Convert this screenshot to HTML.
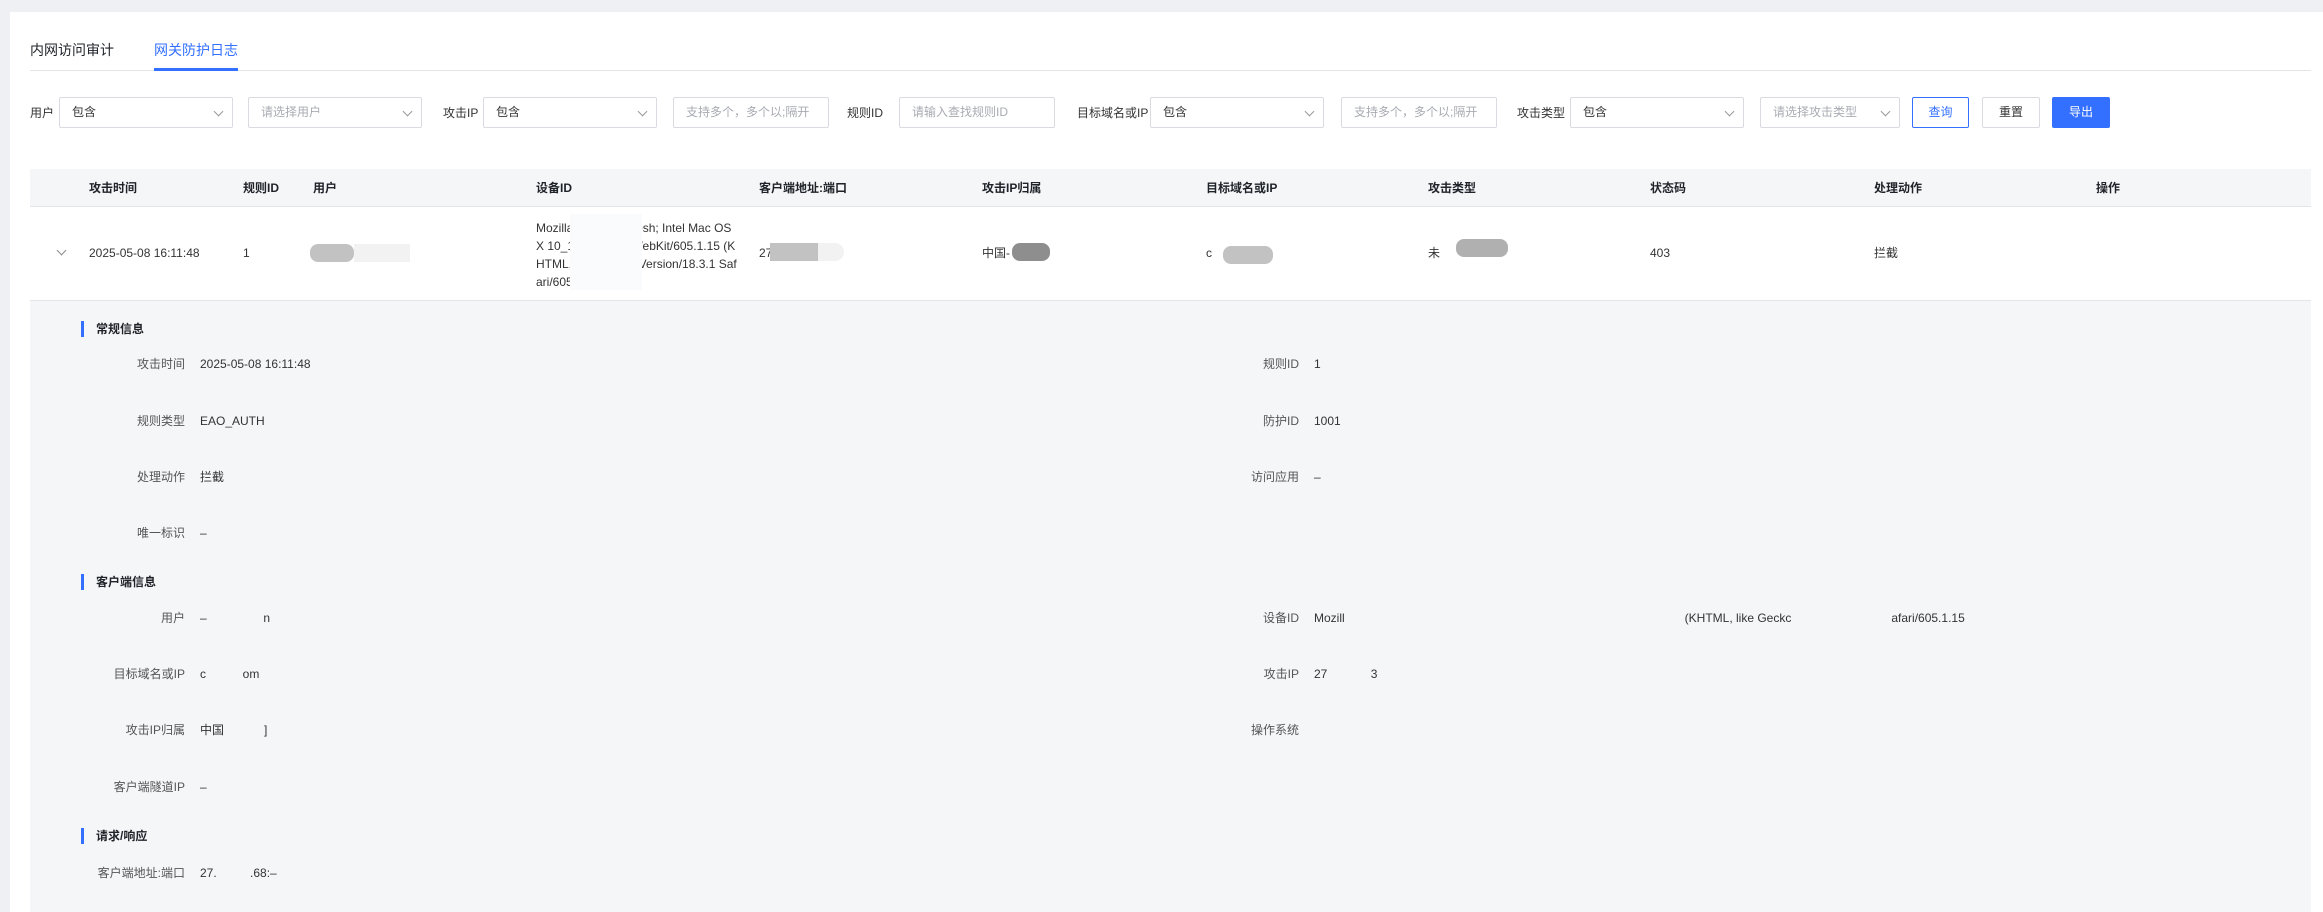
<!DOCTYPE html>
<html><head><meta charset="utf-8"><style>
*{margin:0;padding:0;box-sizing:border-box}
body{width:2323px;height:912px;background:#eef0f4;font-family:"Liberation Sans","Noto Sans CJK SC",sans-serif;font-size:12px;color:#333;position:relative;overflow:hidden}
.card{position:absolute;left:10px;top:12px;width:2313px;height:900px;background:#fff}
.a{position:absolute;white-space:nowrap;line-height:16px}
.box{position:absolute;top:97px;height:31px;border:1px solid #d9dbe0;border-radius:2px;background:#fff;font-size:12px;line-height:29px;padding-left:12px;color:#333}
.ph{color:#a8abb2}
.chev{position:absolute;right:10px;top:10px;width:7px;height:7px;border-right:1px solid #999;border-bottom:1px solid #999;transform:rotate(45deg)}
.btn{position:absolute;top:97px;height:31px;border:1px solid #d9dbe0;border-radius:2px;text-align:center;line-height:29px;font-size:12px;background:#fff}
.th{position:absolute;top:180px;font-weight:bold;color:#1f2329;line-height:16px;white-space:nowrap}
.td{position:absolute;top:245px;line-height:16px;white-space:nowrap}
.lab{position:absolute;width:160px;text-align:right;color:#555;line-height:16px;white-space:nowrap}
.val{position:absolute;line-height:16px;white-space:nowrap;color:#333}
.sec{position:absolute;left:81px;font-weight:bold;color:#1f2329;line-height:16px;padding-left:12px;border-left:3px solid #3370ff;white-space:nowrap}
.blob{position:absolute;background:#c2c2c2;border-radius:8px}
.wb{position:absolute;background:#f2f2f2}
</style></head><body>
<div class="card"></div>
<div class="a" style="left:30px;top:42px;font-size:14px;color:#1f2329">内网访问审计</div>
<div class="a" style="left:154px;top:42px;font-size:14px;color:#3370ff">网关防护日志</div>
<div style="position:absolute;left:30px;top:70px;width:2281px;height:1px;background:#e3e5e8"></div>
<div style="position:absolute;left:154px;top:68px;width:84px;height:3px;background:#3370ff"></div>

<div class="a" style="left:30px;top:105px">用户</div>
<div class="box" style="left:59px;width:174px">包含<span class="chev"></span></div>
<div class="box ph" style="left:248px;width:174px">请选择用户<span class="chev"></span></div>
<div class="a" style="left:443px;top:105px">攻击IP</div>
<div class="box" style="left:483px;width:174px">包含<span class="chev"></span></div>
<div class="box ph" style="left:673px;width:156px">支持多个，多个以;隔开</div>
<div class="a" style="left:847px;top:105px">规则ID</div>
<div class="box ph" style="left:899px;width:156px">请输入查找规则ID</div>
<div class="a" style="left:1077px;top:105px">目标域名或IP</div>
<div class="box" style="left:1150px;width:174px">包含<span class="chev"></span></div>
<div class="box ph" style="left:1341px;width:156px">支持多个，多个以;隔开</div>
<div class="a" style="left:1517px;top:105px">攻击类型</div>
<div class="box" style="left:1570px;width:174px">包含<span class="chev"></span></div>
<div class="box ph" style="left:1760px;width:140px">请选择攻击类型<span class="chev"></span></div>
<div class="btn" style="left:1912px;width:57px;border-color:#3370ff;color:#3370ff">查询</div>
<div class="btn" style="left:1982px;width:58px">重置</div>
<div class="btn" style="left:2052px;width:58px;background:#3370ff;border-color:#3370ff;color:#fff">导出</div>

<div style="position:absolute;left:30px;top:169px;width:2281px;height:38px;background:#f5f6f8;border-bottom:1px solid #e3e5e8"></div>
<div class="th" style="left:89px">攻击时间</div>
<div class="th" style="left:243px">规则ID</div>
<div class="th" style="left:313px">用户</div>
<div class="th" style="left:536px">设备ID</div>
<div class="th" style="left:759px">客户端地址:端口</div>
<div class="th" style="left:982px">攻击IP归属</div>
<div class="th" style="left:1206px">目标域名或IP</div>
<div class="th" style="left:1428px">攻击类型</div>
<div class="th" style="left:1650px">状态码</div>
<div class="th" style="left:1874px">处理动作</div>
<div class="th" style="left:2096px">操作</div>

<div style="position:absolute;left:58px;top:247px;width:7px;height:7px;border-right:1px solid #888;border-bottom:1px solid #888;transform:rotate(45deg)"></div>
<div class="td" style="left:89px">2025-05-08 16:11:48</div>
<div class="td" style="left:243px">1</div>
<div class="blob" style="left:310px;top:244px;width:44px;height:18px"></div>
<div class="wb" style="left:354px;top:244px;width:56px;height:18px"></div>
<div class="a" style="left:536px;top:219px;line-height:18px;white-space:normal;width:202px;word-break:break-all">Mozilla/5.0 (Macintosh; Intel Mac OS X 10_15_7) AppleWebKit/605.1.15 (KHTML, like Gecko) Version/18.3.1 Safari/605.1.15</div>
<div style="position:absolute;left:570px;top:214px;width:72px;height:76px;background:#fafbfc"></div>
<div class="td" style="left:759px">27</div>
<div class="blob" style="left:770px;top:243px;width:48px;height:18px;border-radius:0"></div>
<div class="wb" style="left:818px;top:243px;width:26px;height:18px;border-radius:0 9px 9px 0"></div>
<div class="td" style="left:982px">中国-</div>
<div class="blob" style="left:1012px;top:243px;width:38px;height:18px;background:#8e8e8e"></div>
<div class="td" style="left:1206px">c</div>
<div class="blob" style="left:1223px;top:246px;width:50px;height:18px"></div>
<div class="td" style="left:1428px">未</div>
<div class="blob" style="left:1456px;top:239px;width:52px;height:18px;background:#b0b0b0"></div>
<div class="td" style="left:1650px">403</div>
<div class="td" style="left:1874px">拦截</div>
<div style="position:absolute;left:30px;top:300px;width:2281px;height:612px;background:#f5f6f8;border-top:1px solid #e3e5e8"></div>

<div class="sec" style="top:321px">常规信息</div>
<div class="lab" style="left:25px;top:356px">攻击时间</div><div class="val" style="left:200px;top:356px">2025-05-08 16:11:48</div>
<div class="lab" style="left:1139px;top:356px">规则ID</div><div class="val" style="left:1314px;top:356px">1</div>
<div class="lab" style="left:25px;top:413px">规则类型</div><div class="val" style="left:200px;top:413px">EAO_AUTH</div>
<div class="lab" style="left:1139px;top:413px">防护ID</div><div class="val" style="left:1314px;top:413px">1001</div>
<div class="lab" style="left:25px;top:469px">处理动作</div><div class="val" style="left:200px;top:469px">拦截</div>
<div class="lab" style="left:1139px;top:469px">访问应用</div><div class="val" style="left:1314px;top:469px">–</div>
<div class="lab" style="left:25px;top:525px">唯一标识</div><div class="val" style="left:200px;top:525px">–</div>

<div class="sec" style="top:574px">客户端信息</div>
<div class="lab" style="left:25px;top:610px">用户</div><div class="val" style="left:200px;top:610px">–&nbsp;&nbsp;&nbsp;&nbsp;&nbsp;&nbsp;&nbsp;&nbsp;&nbsp;&nbsp;&nbsp;&nbsp;&nbsp;&nbsp;&nbsp;&nbsp;&nbsp;n</div>
<div class="lab" style="left:1139px;top:610px">设备ID</div><div class="val" style="left:1314px;top:610px">Mozill<span style="display:inline-block;width:340px"></span>(KHTML, like Geckc<span style="display:inline-block;width:100px"></span>afari/605.1.15</div>
<div class="lab" style="left:25px;top:666px">目标域名或IP</div><div class="val" style="left:200px;top:666px">c&nbsp;&nbsp;&nbsp;&nbsp;&nbsp;&nbsp;&nbsp;&nbsp;&nbsp;&nbsp;&nbsp;om</div>
<div class="lab" style="left:1139px;top:666px">攻击IP</div><div class="val" style="left:1314px;top:666px">27&nbsp;&nbsp;&nbsp;&nbsp;&nbsp;&nbsp;&nbsp;&nbsp;&nbsp;&nbsp;&nbsp;&nbsp;&nbsp;3</div>
<div class="lab" style="left:25px;top:722px">攻击IP归属</div><div class="val" style="left:200px;top:722px">中国&nbsp;&nbsp;&nbsp;&nbsp;&nbsp;&nbsp;&nbsp;&nbsp;&nbsp;&nbsp;&nbsp;&nbsp;]</div>
<div class="lab" style="left:1139px;top:722px">操作系统</div>
<div class="lab" style="left:25px;top:779px">客户端隧道IP</div><div class="val" style="left:200px;top:779px">–</div>

<div class="sec" style="top:828px">请求/响应</div>
<div class="lab" style="left:25px;top:865px">客户端地址:端口</div><div class="val" style="left:200px;top:865px">27.&nbsp;&nbsp;&nbsp;&nbsp;&nbsp;&nbsp;&nbsp;&nbsp;&nbsp;&nbsp;.68:–</div>
</body></html>
